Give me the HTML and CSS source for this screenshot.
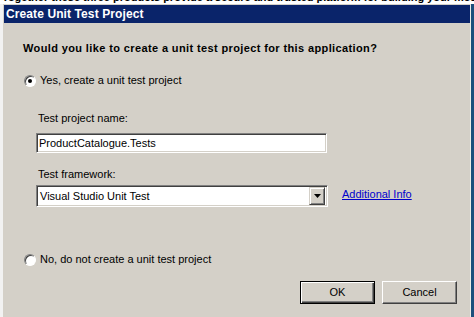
FILE: index.html
```html
<!DOCTYPE html>
<html>
<head>
<meta charset="utf-8">
<link rel="stylesheet" href="styles.css">
</head>
<body>
<div class="page">
  <div class="behind"><span class="behind-text">Together these three products provide a secure and trusted platform for building your most</span></div>
  <div class="row">
    <div class="left-strip"></div>
    <div class="dialog">
      <div class="titlebar">Create Unit Test Project</div>
      <div class="content">
        <div class="heading">Would you like to create a unit test project for this application?</div>
        <div class="radio-row first">
          <span class="radio checked"></span>
          <span class="radio-label">Yes, create a unit test project</span>
        </div>
        <div class="field-label name-label">Test project name:</div>
        <div class="textbox">ProductCatalogue.Tests</div>
        <div class="field-label fw-label">Test framework:</div>
        <div class="select-row">
          <div class="select">
            <span class="select-text">Visual Studio Unit Test</span>
            <span class="drop-btn"><svg width="7" height="4" viewBox="0 0 7 4"><path d="M0 0H7L3.5 4Z" fill="#000"/></svg></span>
          </div>
          <a class="link" href="#">Additional Info</a>
        </div>
        <div class="radio-row second">
          <span class="radio"></span>
          <span class="radio-label">No, do not create a unit test project</span>
        </div>
        <div class="buttons">
          <div class="btn default"><span class="btn-inner">OK</span></div>
          <div class="btn"><span class="btn-inner">Cancel</span></div>
        </div>
      </div>
    </div>
    <div class="right-strip"></div>
  </div>
</div>
</body>
</html>
```

FILE: styles.css
```css
html, body {
  margin: 0;
  padding: 0;
  width: 474px;
  height: 317px;
  overflow: hidden;
  background: #ffffff;
  font-family: "Liberation Sans", Arial, sans-serif;
  font-size: 11px;
  color: #000;
}
.page {
  width: 474px;
  height: 317px;
  display: flex;
  flex-direction: column;
}
.behind {
  height: 4px;
  overflow: hidden;
  white-space: nowrap;
  background: #fff;
}
.behind-text {
  display: block;
  margin-top: -9px;
  line-height: 13px;
  font-weight: bold;
  padding-left: 2px;
}
.row {
  flex: 1;
  display: flex;
}
.left-strip {
  width: 3px;
  background: #f2f2f2;
}
.dialog {
  width: 466px;
  border-left: 1px solid #d4d0c8;
  border-top: 1px solid #d4d0c8;
  border-right: 1px solid #ecebe6;
  background: #d4d0c8;
  display: flex;
  flex-direction: column;
}
.right-strip {
  width: 3px;
  background: #1d4f7c;
}
.titlebar {
  height: 18px;
  line-height: 18px;
  background: #0a246a;
  color: #fff;
  font-weight: bold;
  font-size: 12px;
  padding-left: 2px;
  letter-spacing: 0.1px;
}
.content {
  display: flex;
  flex-direction: column;
  padding-left: 19px;
}
.heading {
  margin-top: 19px;
  line-height: 13px;
  font-weight: bold;
  font-size: 11px;
  letter-spacing: 0.38px;
}
.radio-row {
  display: flex;
  align-items: center;
  height: 13px;
  line-height: 13px;
}
.radio-row.first {
  margin-top: 19px;
}
.radio-row.second {
  margin-top: 46px;
}
.radio {
  width: 12px;
  height: 12px;
  box-sizing: border-box;
  border-radius: 50%;
  background: #fff;
  border: 1px solid;
  border-color: #808080 #ffffff #ffffff #808080;
  box-shadow: inset 1px 1px 0 #404040;
  margin-left: 1px;
  margin-right: 4px;
  position: relative;
}
.radio.checked::after {
  content: "";
  position: absolute;
  left: 3px;
  top: 3px;
  width: 4px;
  height: 4px;
  border-radius: 50%;
  background: #000;
}
.field-label {
  line-height: 13px;
  padding-left: 15px;
}
.name-label {
  margin-top: 25px;
}
.textbox {
  margin-top: 8px;
  margin-left: 13px;
  width: 291px;
  height: 20px;
  box-sizing: border-box;
  background: #fff;
  border: 1px solid;
  border-color: #808080 #ffffff #ffffff #808080;
  box-shadow: inset 1px 1px 0 #404040, inset -1px -1px 0 #d4d0c8;
  padding-left: 2px;
  line-height: 18px;
}
.fw-label {
  margin-top: 15px;
}
.select-row {
  margin-top: 4px;
  display: flex;
  align-items: center;
}
.select {
  margin-left: 13px;
  width: 292px;
  height: 22px;
  box-sizing: border-box;
  background: #fff;
  border: 1px solid;
  border-color: #808080 #ffffff #ffffff #808080;
  box-shadow: inset 1px 1px 0 #404040, inset -1px -1px 0 #d4d0c8;
  padding: 2px 2px 2px 3px;
  display: flex;
  align-items: center;
}
.select-text {
  flex: 1;
  line-height: 15px;
  padding-top: 1px;
}
.drop-btn {
  width: 16px;
  height: 18px;
  box-sizing: border-box;
  background: #d4d0c8;
  border: 1px solid;
  border-color: #d4d0c8 #404040 #404040 #d4d0c8;
  box-shadow: inset 1px 1px 0 #ffffff, inset -1px -1px 0 #808080;
  display: flex;
  align-items: center;
  justify-content: center;
}
.link {
  margin-left: 14px;
  color: #0000cc;
  text-decoration: underline;
  line-height: 13px;
  margin-top: -3px;
}
.buttons {
  margin-top: 15px;
  display: flex;
  justify-content: flex-end;
  gap: 7px;
  padding-right: 13px;
}
.btn {
  width: 75px;
  height: 23px;
  box-sizing: border-box;
  background: #d4d0c8;
  border: 1px solid;
  border-color: #ffffff #404040 #404040 #ffffff;
  box-shadow: inset -1px -1px 0 #808080;
  display: flex;
  align-items: center;
  justify-content: center;
}
.btn.default {
  border: 1px solid #000;
  box-shadow: inset 1px 1px 0 #ffffff, inset -1px -1px 0 #404040, inset -2px -2px 0 #808080;
}
.btn-inner {
  line-height: 13px;
}
```
